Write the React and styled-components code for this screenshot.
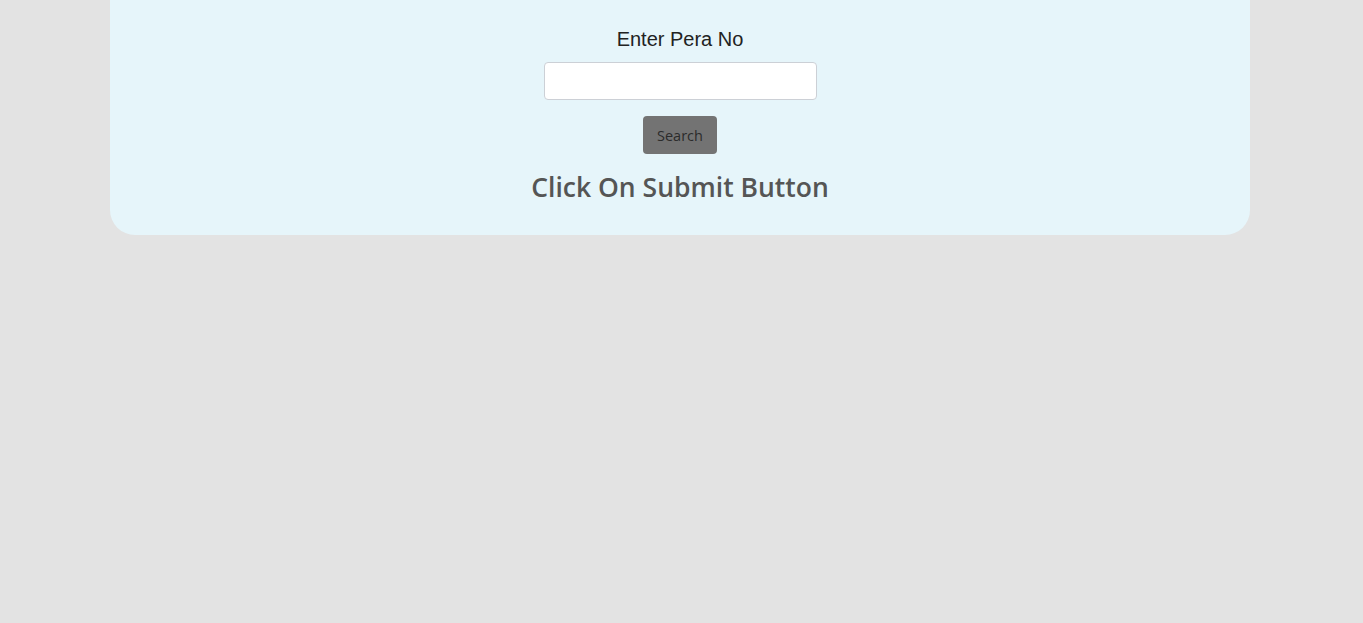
import React from "react";
import styled, { createGlobalStyle } from "styled-components";

const GlobalStyle = createGlobalStyle`
  body {
    margin: 0;
    background-color: #e3e3e3;
    font-family: "Open Sans", sans-serif;
  }
`;

const Page = styled.div`
  min-height: 623px;
  padding: 0 113px 0 110px;
`;

const Card = styled.section`
  background-color: #e6f5fa;
  border-radius: 0 0 25px 25px;
  padding: 26px 0 31px;
  display: flex;
  flex-direction: column;
  align-items: center;
`;

const Label = styled.label`
  font-family: "Liberation Sans", Arial, sans-serif;
  font-size: 20px;
  color: #222;
  line-height: 26px;
`;

const Input = styled.input`
  margin-top: 10px;
  width: 273px;
  height: 38px;
  box-sizing: border-box;
  border: 1px solid #ccd0d6;
  border-radius: 4px;
  background: #fff;
  outline: none;
`;

const Button = styled.button`
  margin-top: 16px;
  width: 74px;
  height: 38px;
  border: none;
  border-radius: 4px;
  background-color: #737373;
  color: #2b2b2b;
  font-family: "Open Sans", sans-serif;
  font-size: 14.5px;
`;

const Heading = styled.h2`
  margin: 16px 0 0;
  font-family: "Open Sans", sans-serif;
  font-weight: 600;
  font-size: 26.5px;
  line-height: 34px;
  color: #555;
`;

const App = () => {
  return (
    <>
      <GlobalStyle />
      <Page>
        <Card>
          <Label htmlFor="pera">Enter Pera No</Label>
          <Input id="pera" type="text" />
          <Button>Search</Button>
          <Heading>Click On Submit Button</Heading>
        </Card>
      </Page>
    </>
  );
};

export default App;
